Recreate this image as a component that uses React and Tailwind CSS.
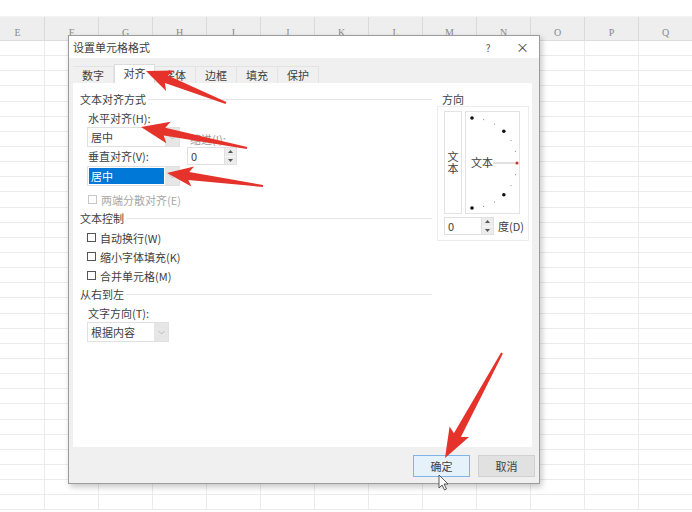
import React from "react";

const COLS = ["E", "F", "G", "H", "I", "J", "K", "L", "M", "N", "O", "P", "Q"];
const ROWS = Array.from({ length: 31 }, (_, i) => i);

function arrowPoints(sx, sy, tx, ty, hl, hw, w1, w0) {
  const dx = tx - sx;
  const dy = ty - sy;
  const L = Math.hypot(dx, dy);
  const ux = dx / L;
  const uy = dy / L;
  const nx = -uy;
  const ny = ux;
  const bx = tx - ux * hl;
  const by = ty - uy * hl;
  const wx = bx - ux * 4;
  const wy = by - uy * 4;
  const pts = [
    [sx + nx * w0, sy + ny * w0],
    [bx + nx * w1, by + ny * w1],
    [wx + nx * hw, wy + ny * hw],
    [tx, ty],
    [wx - nx * hw, wy - ny * hw],
    [bx - nx * w1, by - ny * w1],
    [sx - nx * w0, sy - ny * w0],
  ];
  return pts.map((p) => p[0].toFixed(1) + "," + p[1].toFixed(1)).join(" ");
}

function SectionHeader({ title, className = "" }) {
  return (
    <div className={"flex items-center h-[14px] " + className}>
      <span className="text-[11px] leading-[14px] text-[#404040]">{title}</span>
      <div className="flex-1 h-px bg-[#e6e6e6] ml-[2px]" />
    </div>
  );
}

function Select({ value, width, highlight }) {
  return (
    <div
      className="flex h-[20px] border border-[#e0e0e0] bg-white"
      style={{ width }}
    >
      <div className="flex-1 flex items-center px-[1px]">
        {highlight ? (
          <div className="w-full h-[16px] bg-[#0078d7] text-white text-[11px] leading-[16px] pl-[2px]">
            {value}
          </div>
        ) : (
          <span className="text-[11px] leading-[16px] text-[#404040] pl-[2px]">{value}</span>
        )}
      </div>
      <div className="w-[14px] bg-[#e6e6e6] flex items-center justify-center">
        <svg width="7" height="5" viewBox="0 0 7 5">
          <path d="M0.5 1 L3.5 4 L6.5 1" fill="none" stroke="#b0b0b0" strokeWidth="0.8" />
        </svg>
      </div>
    </div>
  );
}

function Spinner({ width }) {
  return (
    <div className="flex h-[18px] border border-[#e0e0e0] bg-white" style={{ width }}>
      <div className="flex-1 text-[11px] leading-[16px] text-[#404040] pl-[3px]">0</div>
      <div className="w-[12px] flex flex-col bg-[#ececec] border-l border-[#e0e0e0]">
        <div className="flex-1 flex items-center justify-center border-b border-[#f8f8f8]">
          <svg width="5" height="3" viewBox="0 0 5 3"><path d="M0 3 L2.5 0 L5 3 Z" fill="#555" /></svg>
        </div>
        <div className="flex-1 flex items-center justify-center">
          <svg width="5" height="3" viewBox="0 0 5 3"><path d="M0 0 L2.5 3 L5 0 Z" fill="#555" /></svg>
        </div>
      </div>
    </div>
  );
}

function Check({ label, disabled }) {
  return (
    <div className={"flex items-center h-[19px] " + (disabled ? "pl-[8px]" : "pl-[7px]")}>
      <div
        className={
          "w-[9px] h-[9px] border " + (disabled ? "border-[#c8c8c8]" : "border-[#555]")
        }
      />
      <span
        className={
          "ml-[4px] text-[11px] leading-[14px] " + (disabled ? "text-[#a8a8a8]" : "text-[#404040]")
        }
      >
        {label}
      </span>
    </div>
  );
}

function Orientation() {
  const dots = [];
  for (let a = -90; a <= 90; a += 15) {
    const r = (a * Math.PI) / 180;
    const x = 6 + 45 * Math.cos(r);
    const y = 51 + 45 * Math.sin(r);
    let rad = 0.6;
    let fill = "#888";
    if (Math.abs(a) === 90 || Math.abs(a) === 45) {
      rad = 1.8;
      fill = "#111";
    }
    if (a === 0) {
      rad = 1.6;
      fill = "#c0392b";
    }
    dots.push(<circle key={a} cx={x} cy={y} r={rad} fill={fill} />);
  }
  return (
    <div className="flex flex-col">
      <div className="h-[14px] text-[11px] leading-[14px] text-[#404040] pl-[5px]">方向</div>
      <div className="w-[92px] h-[135px] border border-[#ececec] flex flex-col pl-[6px] pt-[4px]">
        <div className="flex">
          <div className="w-[18px] h-[103px] border border-[#e3e3e3] flex items-center justify-center">
            <span className="[writing-mode:vertical-rl] text-[11px] leading-[14px] tracking-[1px] text-[#404040]">
              文本
            </span>
          </div>
          <div className="relative w-[55px] h-[103px] border border-[#e3e3e3] ml-[3px]">
            <svg className="absolute inset-0" width="54" height="102" viewBox="0 0 54 102">
              <line x1="27" y1="51" x2="49" y2="51" stroke="#aaa" strokeWidth="0.7" />
              {dots}
            </svg>
            <span className="absolute left-[5px] top-[44px] text-[11px] leading-[12px] text-[#404040] bg-white">
              文本
            </span>
          </div>
        </div>
        <div className="flex items-center mt-[3px]">
          <Spinner width={50} />
          <span className="ml-[4px] text-[11px] leading-[14px] text-[#404040]">度(D)</span>
        </div>
      </div>
    </div>
  );
}

function Dialog() {
  const tabs = ["数字", "对齐", "字体", "边框", "填充", "保护"];
  return (
    <div className="absolute left-[68px] top-[35px] w-[472px] h-[449px] bg-[#f0f0f0] border border-[#9c9c9c] shadow-[2px_3px_6px_rgba(0,0,0,0.22)] flex flex-col">
      <div className="h-[22px] bg-white flex items-center">
        <span className="ml-[4px] text-[11px] leading-[14px] text-[#404040]">设置单元格格式</span>
        <span className="ml-auto text-[10px] text-[#555] w-[14px] text-center">?</span>
        <span className="ml-[21px] mr-[11px] text-[13px] leading-[14px] text-[#444] w-[12px] text-center">×</span>
      </div>
      <div className="h-[25px] flex items-end pl-[4px]">
        {tabs.map((t, i) =>
          i === 1 ? (
            <div
              key={t}
              className="w-[41px] h-[19px] bg-white border-t border-l border-r border-[#dcdcdc] text-center text-[11px] leading-[17px] text-[#404040]"
            >
              {t}
            </div>
          ) : (
            <div
              key={t}
              className="w-[41px] h-[17px] border-r border-t border-[#e3e3e3] text-center text-[11px] leading-[16px] text-[#404040]"
            >
              {t}
            </div>
          )
        )}
      </div>
      <div className="ml-[4px] w-[459px] h-[364px] bg-white flex pt-[9px]">
        <div className="w-[359px] pl-[7px] flex flex-col">
          <SectionHeader title="文本对齐方式" />
          <div className="flex pl-[7px] mt-[5px]">
            <div className="flex flex-col w-[93px]">
              <div className="h-[14px] text-[11px] leading-[14px] text-[#404040] pl-[1px]">水平对齐(H):</div>
              <div className="mt-[2px]">
                <Select value="居中" width={93} />
              </div>
              <div className="mt-[2px] h-[14px] text-[11px] leading-[14px] text-[#404040] pl-[1px]">垂直对齐(V):</div>
              <div className="mt-[3px]">
                <Select value="居中" width={93} highlight />
              </div>
            </div>
            <div className="flex flex-col ml-[7px]">
              <div className="mt-[21px] h-[14px] text-[11px] leading-[14px] text-[#999] pl-[3px]">缩进(I):</div>
              <div className="mt-[1px]">
                <Spinner width={50} />
              </div>
            </div>
          </div>
          <div className="mt-[4px]">
            <Check label="两端分散对齐(E)" disabled />
          </div>
          <SectionHeader title="文本控制" className="mt-[2px]" />
          <div className="mt-[3px] flex flex-col">
            <Check label="自动换行(W)" />
            <Check label="缩小字体填充(K)" />
            <Check label="合并单元格(M)" />
          </div>
          <SectionHeader title="从右到左" className="mt-[2px]" />
          <div className="mt-[5px] pl-[8px] h-[14px] text-[11px] leading-[14px] text-[#404040]">文字方向(T):</div>
          <div className="mt-[2px] pl-[7px]">
            <Select value="根据内容" width={82} />
          </div>
        </div>
        <div className="ml-[5px]">
          <Orientation />
        </div>
      </div>
      <div className="flex-1 flex justify-end pt-[8px] pr-[4px] gap-[8px]">
        <div className="w-[57px] h-[22px] bg-[#e5f1fb] border border-[#7eb4ea] text-center text-[11px] leading-[20px] text-[#404040]">
          确定
        </div>
        <div className="w-[57px] h-[22px] bg-[#e1e1e1] border border-[#d0d0d0] text-center text-[11px] leading-[20px] text-[#404040]">
          取消
        </div>
      </div>
    </div>
  );
}

export default function App() {
  const red = "#e5322b";
  return (
    <div className="relative w-[692px] h-[512px] overflow-hidden bg-white font-['Noto_Sans_CJK_SC',sans-serif]">
      <div className="h-[17px] bg-white border-b border-[#f3f3f3]" />
      <div className="h-[24px] bg-[#eeeeee] border-b border-[#dcdcdc] flex ml-[-9px]">
        {COLS.map((c) => (
          <div
            key={c}
            className="w-[54px] shrink-0 border-r border-[#dadada] flex items-end justify-center pb-[1px] font-['Liberation_Serif',serif] text-[10px] leading-[12px] text-[#8a8a8a]"
          >
            {c}
          </div>
        ))}
      </div>
      <div className="flex flex-col ml-[-9px]">
        {ROWS.map((r) => (
          <div key={r} className="h-[15.15px] flex border-b border-[#ebebeb]">
            {COLS.map((c) => (
              <div key={c} className="w-[54px] shrink-0 border-r border-[#ebebeb]" />
            ))}
          </div>
        ))}
      </div>

      <Dialog />

      <svg
        className="absolute left-0 top-0 pointer-events-none"
        width="692"
        height="512"
        viewBox="0 0 692 512"
      >
        <polygon points={arrowPoints(226, 103, 146, 71, 22, 11, 4, 1)} fill={red} />
        <polygon points={arrowPoints(247, 148, 141, 127, 24, 11, 4, 1)} fill={red} />
        <polygon points={arrowPoints(263, 186, 167, 173, 22, 10, 4, 1)} fill={red} />
        <polygon points={arrowPoints(502, 353, 445, 458, 26, 11, 4, 1)} fill={red} />
        <path
          d="M439 475 L439 488 L442 485 L444.5 490 L446.5 489 L444 484 L448 484 Z"
          fill="#fff"
          stroke="#333"
          strokeWidth="0.8"
          strokeLinejoin="round"
        />
      </svg>
    </div>
  );
}
